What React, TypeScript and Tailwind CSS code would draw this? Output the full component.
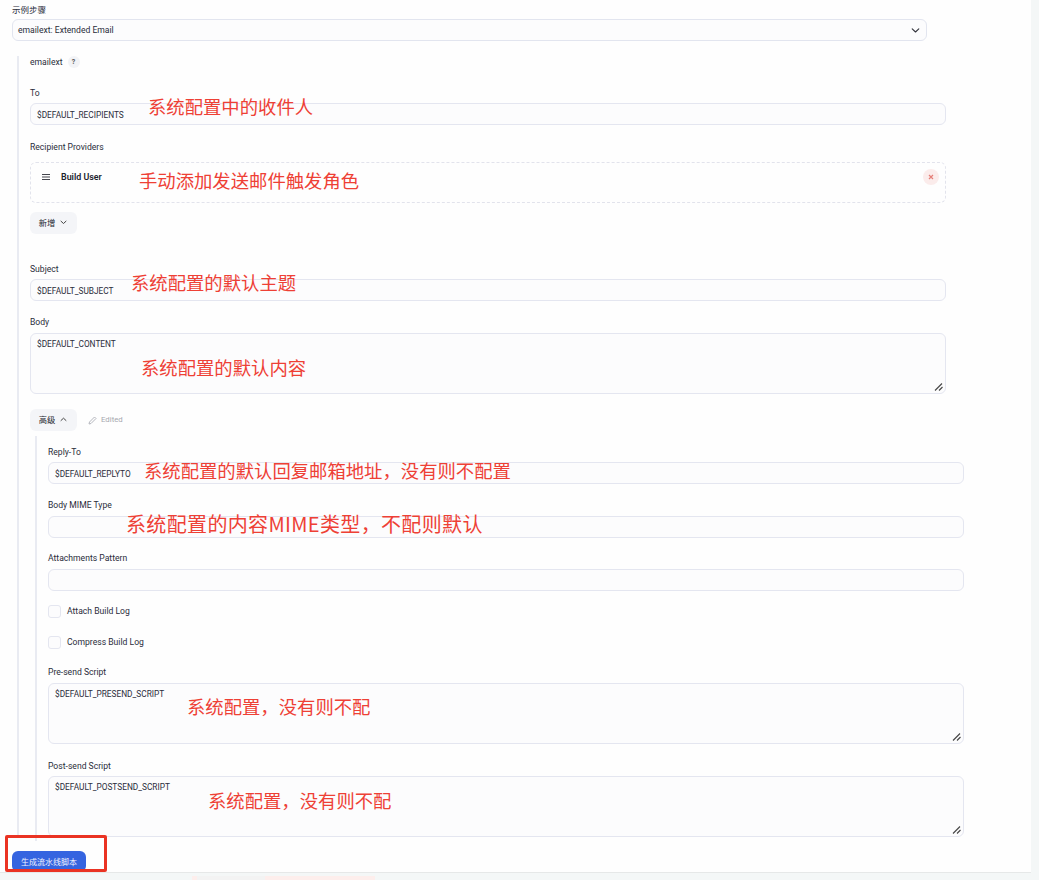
const cjk = '"Noto Sans CJK SC", sans-serif';

function Label({ children, className = "" }: { children: React.ReactNode; className?: string }) {
  return <div className={`h-[12px] leading-[12px] text-[8.6px] text-[#2a2c3a] ${className}`}>{children}</div>;
}

function TextField({ value = "", className = "" }: { value?: string; className?: string }) {
  return (
    <div className={`h-[22px] rounded-[6px] border border-[#e4e6f0] bg-[#fcfcfd] px-[6px] leading-[22px] text-[8.3px] text-[#2a2c3a] ${className}`}>
      {value}
    </div>
  );
}

function Grip() {
  return (
    <svg className="absolute bottom-[1px] right-[1px]" width="10" height="10" viewBox="0 0 10 10" fill="none" stroke="#4a4a4a" strokeWidth="1.2">
      <path d="M1 8.5 L8 1.5 M5 8.5 L8.5 5" />
    </svg>
  );
}

function TextArea({ value, className = "" }: { value: string; className?: string }) {
  return (
    <div className={`relative h-[61px] rounded-[6px] border border-[#e4e6f0] bg-[#fcfcfd] px-[6px] pt-[4px] leading-[13px] text-[8.3px] text-[#2a2c3a] ${className}`}>
      {value}
      <Grip />
    </div>
  );
}

function PillButton({ label, up, className = "" }: { label: string; up?: boolean; className?: string }) {
  return (
    <div className={`flex h-[22px] w-[47px] items-center justify-center gap-[5px] rounded-[6px] bg-[#f4f5f8] pb-[2px] pr-[1px] text-[8.3px] text-[#24262f] ${className}`} style={{ fontFamily: cjk }}>
      <span>{label}</span>
      <svg width="7" height="5" viewBox="0 0 7 5" fill="none" stroke="#444" strokeWidth="1" strokeLinecap="round" strokeLinejoin="round">
        <path d={up ? "M1 3.5 L3.5 1.2 L6 3.5" : "M1 1.2 L3.5 3.5 L6 1.2"} />
      </svg>
    </div>
  );
}

function CheckRow({ label, className = "" }: { label: string; className?: string }) {
  return (
    <div className={`flex h-[14px] items-center gap-[6px] ${className}`}>
      <div className="h-[13px] w-[13px] rounded-[3px] border border-[#e4e6f0] bg-[#fcfcfd]" />
      <span className="pt-[1px] text-[8.6px] text-[#2a2c3a]">{label}</span>
    </div>
  );
}

function Note({ text, className }: { text: string; className: string }) {
  return (
    <div className={`absolute whitespace-nowrap leading-[24px] text-[#ee4035] ${className}`} style={{ fontFamily: cjk }}>
      {text}
    </div>
  );
}

export default function App() {
  return (
    <div className="relative flex h-[880px] w-[1039px] flex-col overflow-hidden bg-[#f4f7f7]" style={{ fontFamily: 'Roboto, "Noto Sans CJK SC", sans-serif' }}>
      <div className="h-[873px] w-[1031px] shrink-0 border-b border-[#e6e8e8] bg-[#fefefe] pl-[12px] pt-[3px]">
        <div className="h-[12px] text-[8.5px] leading-[12px] text-[#2a2c3a]" style={{ fontFamily: cjk }}>示例步骤</div>
        <div className="mt-[4px] flex h-[22px] w-[915px] items-center justify-between rounded-[6px] border border-[#e2e5ef] bg-[#fcfcfd] pl-[5px] pr-[6px] text-[8.6px] text-[#2a2c3a]">
          <span>emailext: Extended Email</span>
          <svg width="9" height="7" viewBox="0 0 9 7" fill="none" stroke="#33343c" strokeWidth="1.1" strokeLinecap="round" strokeLinejoin="round">
            <path d="M1.2 1.8 L4.5 5 L7.8 1.8" />
          </svg>
        </div>

        <div className="ml-[5px] mt-[15px] h-[779px] w-[929px] border-l-2 border-[#e9ebf2] pl-[11px]">
          <div className="flex h-[12px] items-center gap-[5px] text-[8.6px] text-[#2a2c3a]">
            <span>emailext</span>
            <span className="flex h-[12px] w-[12px] items-center justify-center rounded-full bg-[#f2f3f6] text-[7px] font-bold text-[#555]">?</span>
          </div>

          <Label className="mt-[19px]">To</Label>
          <TextField className="mt-[4px]" value="$DEFAULT_RECIPIENTS" />

          <Label className="mt-[16px]">Recipient Providers</Label>
          <div className="mt-[9px] flex h-[41px] justify-between rounded-[6px] border border-dashed border-[#e2e3ec] pl-[11px] pr-[6px] pt-[6px]">
            <div className="flex h-[16px] items-center gap-[11px]">
              <svg width="8" height="6" viewBox="0 0 8 6" stroke="#44454d" strokeWidth="1">
                <path d="M0 0.5 H8 M0 3 H8 M0 5.5 H8" />
              </svg>
              <span className="pt-[1px] text-[8.9px] font-semibold text-[#20222c]">Build User</span>
            </div>
            <div className="flex h-[16px] w-[16px] items-center justify-center rounded-full bg-[#fbeceb]">
              <svg width="6" height="6" viewBox="0 0 6 6" stroke="#e57f78" strokeWidth="1.2">
                <path d="M1 1 L5 5 M5 1 L1 5" />
              </svg>
            </div>
          </div>
          <PillButton label="新增" className="mt-[9px]" />

          <Label className="mt-[29px]">Subject</Label>
          <TextField className="mt-[4px]" value="$DEFAULT_SUBJECT" />

          <Label className="mt-[15px]">Body</Label>
          <TextArea className="mt-[5px]" value="$DEFAULT_CONTENT" />

          <div className="mt-[15px] flex items-center gap-[11px]">
            <PillButton label="高级" up />
            <div className="flex items-center gap-[4px] text-[7.8px] text-[#a6a8b0]">
              <svg width="9" height="9" viewBox="0 0 9 9" fill="none" stroke="#b5b7be" strokeWidth="1">
                <path d="M1 8 L1.5 6 L6.5 1 L8 2.5 L3 7.5 Z" />
              </svg>
              <span>Edited</span>
            </div>
          </div>

          <div className="ml-[5px] mt-[5px] h-[405px] w-[929px] border-l-2 border-[#e9ebf2] pl-[11px] pt-[10px]">
            <Label>Reply-To</Label>
            <TextField className="mt-[4px]" value="$DEFAULT_REPLYTO" />
            <Label className="mt-[15px]">Body MIME Type</Label>
            <TextField className="mt-[5px]" />
            <Label className="mt-[14px]">Attachments Pattern</Label>
            <TextField className="mt-[5px]" />
            <CheckRow className="mt-[13px]" label="Attach Build Log" />
            <CheckRow className="mt-[17px]" label="Compress Build Log" />
            <Label className="mt-[17px]">Pre-send Script</Label>
            <TextArea className="mt-[5px]" value="$DEFAULT_PRESEND_SCRIPT" />
            <Label className="mt-[16px]">Post-send Script</Label>
            <TextArea className="mt-[4px]" value="$DEFAULT_POSTSEND_SCRIPT" />
          </div>
        </div>

        <div className="mt-[16px] flex h-[21px] w-[74px] items-center justify-center rounded-[6px] bg-[#3564e0] text-[8px] text-[#eef2ff]" style={{ fontFamily: cjk }}>
          生成流水线脚本
        </div>
      </div>

      <div className="ml-[192px] mt-[3px] flex h-[4px] w-[183px] bg-[#fdeeec] pl-[5px]">
        <div className="h-[4px] w-[68px] bg-[#f3f3f3]" />
      </div>

      <Note text="系统配置中的收件人" className="left-[148px] top-[94px] text-[18.35px]" />
      <Note text="手动添加发送邮件触发角色" className="left-[139px] top-[168px] text-[18.35px]" />
      <Note text="系统配置的默认主题" className="left-[131px] top-[270px] text-[18.35px]" />
      <Note text="系统配置的默认内容" className="left-[141px] top-[355px] text-[18.35px]" />
      <Note text="系统配置的默认回复邮箱地址，没有则不配置" className="left-[144px] top-[458px] text-[18.35px]" />
      <Note text="系统配置的内容MIME类型，不配则默认" className="left-[126px] top-[512px] text-[20px] tracking-[0.35px]" />
      <Note text="系统配置，没有则不配" className="left-[187px] top-[694px] text-[18.35px]" />
      <Note text="系统配置，没有则不配" className="left-[208px] top-[788px] text-[18.35px]" />
      <div className="absolute left-[5px] top-[835px] h-[37px] w-[102px] rounded-[2px] border-[3px] border-[#ea3323]" />
    </div>
  );
}
